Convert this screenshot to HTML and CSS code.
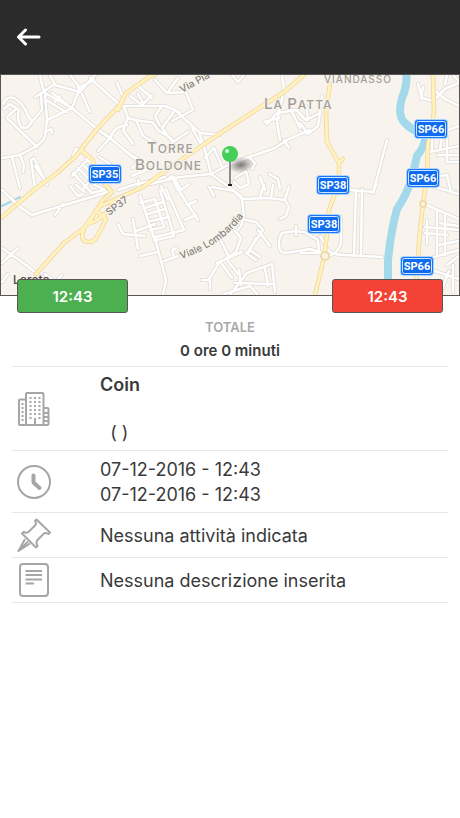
FILE: index.html
```html
<!DOCTYPE html>
<html lang="it">
    <head>
        <meta charset="utf-8">
        <title>Dettaglio</title>
        <meta name="viewport" content="width=device-width, initial-scale=1">
        <link rel="stylesheet" href="styles.css">
    </head>

    <body>
        <header class="topbar">
            <button class="back" type="button" aria-label="Indietro">
                <svg width="26" height="18" viewBox="0 0 26 18"><path d="M23 9H3M9.5 2L2.500 9l7 7"/></svg>
            </button>
        </header>

        <div class="map">
            <svg viewBox="1 75 458 220" preserveAspectRatio="xMidYMid slice">
                <defs>
                    <!-- small streets -->
                    <g id="streets">
                        <path d="M40 75L42 85 45 93 47 120 45 137Q41 144 33 148L20 155 2 158M43 92L72 108 97 129 110 138 128 153 140 163M50 75L55 85 80 92M35 97L43 92 55 84M70 75L80 88 72 108 47 120M95 75L78 94M78 88L94 80M90 78L120 105M117 83L123 97M82 94L90 112M46 100L66 112M52 93L67 104M60 96L55 102M45 132L51 129 52 133"/>
                        <path d="M3 104Q6 96 14 98Q24 104 27 114L32 122Q28 130 21 127Q16 118 19 110L10 104 4 109M41 95L42 110 29 125M7 118L37 147M8 116L15 110M12 157L20 188M20 155L24 165 23 172M31 160L34 158 47 185M31 160L35 188M35 166L45 180"/>
                        <path d="M120 106H165L175 110 200 133 220 135M124 107L128 118 123 130 133 144M128 118Q142 122 152 122L160 132M136 120L143 136 155 143M127 125Q114 126 110 138L98 151M152 122L158 130 172 139M162 106L155 116 160 126M175 110L162 128 173 142 188 132M173 142L166 152M182 117L178 111"/>
                        <path d="M155 80L167 93 186 92 193 110 172 121M167 93L178 78M130 96L142 105 152 95M138 86L152 98M143 103L138 94M97 129L110 138M199 132L205 150 211 174M192 128L202 146M205 158L214 148 222 167M211 174L228 165 252 156 275 148 289 139 310 130M150 184L180 177 211 174 225 184 242 197"/>
                        <path d="M232 75L238 82 244 75M282 75L284 90 279 112 277 122 280 140M264 122L279 118M267 124L279 111M284 140L289 148M300 123L308 134 318 126 322 96M278 113L296 110 306 120 318 114M290 108L300 128M306 106L308 120M248 157L255 163 252 169"/>
                        <path d="M75 156L79 149 76 149 73 156M72 176L90 157M73 173L88 189M78 168L94 184M82 164L98 179M86 159L103 172M92 178L84 188M99 157L110 164 109 190M126 152L140 160 132 168M118 190L133 185 150 181 165 177M132 176L150 168M138 180L139 187M166 180L172 176 177 189M174 177L181 190 189 184M161 186L168 200"/>
                        <path d="M2 190L20 207 32 215 58 207 85 199 108 192M55 215L63 204M70 186L78 196 83 194M76 185L85 192M85 186L92 193 104 190M95 185L105 190M2 248L26 265 48 282M18 248L2 263M45 274L60 285M62 275L53 285M2 282L8 274"/>
                        <path d="M118 224L123 234 145 236M133 219L138 249M136 231L155 224M140 256L158 252M140 196L155 241M140 203L155 199 164 227 150 230M145 208L163 202M148 214L165 209M151 221L169 217M160 190L174 236 156 240M166 189L184 230 155 237M177 188L198 220M187 205L196 201M185 220L196 215M155 238L166 280 163 294M164 261L178 256M174 257L172 250 177 248"/>
                        <path d="M209 187L214 196M212 187L234 191 242 199 244 216Q242 226 238 230M242 199L268 198 285 200 289 207 286 216 280 219M260 197L264 185M271 198L273 185M285 199L289 187M235 231L241 238 236 252 219 263 209 279M241 219L256 222 263 230 247 253M258 230L270 246M256 238L249 252M219 237L229 257 236 252M217 263L242 252M222 264L232 278M228 261L238 274M202 280L210 280 210 289M246 253L256 260M251 251L260 257M230 295L247 273 272 264 275 292M235 283L272 284M239 270L241 285M224 294L250 286 258 295M265 269L268 286"/>
                        <path d="M280 250Q277 240 282 233L296 231 302 232M280 250Q282 254 292 252L310 249 320 252M296 226V235"/>
                        <path d="M235 178L246 171 249 184 240 188 234 182M260 177L265 190M269 174L278 179 280 189M320 182L352 190M387 140L373 193M350 190L373 192 376 185M356 190L354 255M362 189L361 254M320 236L328 250Q332 255 345 255L382 257M304 232L318 240 319 252M341 217V237Q342 252 328 256M301 253H323"/>
                        <path d="M418 84L422 98 434 101M423 87L421 99M433 101L445 89 459 83M434 90L445 99 459 106M447 75L445 84M454 76L459 81M430 152L459 146M440 148L443 132 459 126M447 136V162H459M438 155H459M432 151V126M428 185L459 194M434 177L447 175 451 192M424 204L459 219M425 227L459 230M425 233L447 235M427 220V244M437 211V254M445 214V255M440 223L459 226M438 245L459 241M434 257L459 250M447 265L459 256M435 271L459 279M449 271L442 289M453 265V292"/>
                    </g>
                    <!-- provincial roads -->
                    <g id="roads">
                        <path d="M152 75L126 93 119 106 97 129 75 157 57 173 35 189 2 217M304 75L284 92 222 132 178 162 143 187 100 206 83 229 64 243 36 274M126 93L118 110M82 151L92 159 98 176 112 192 102 201 88 224 96 221 106 213 114 201M84 229Q79 241 88 242Q94 243 98 235L106 219 98 212"/>
                        <path d="M330 84L326 112 327 142 339 163 339 182 329 210 325 253 315 295M339 163L343 159M152 76L162 70M433 75L434 112 428 145 427 174 423 204 420 231 416 285"/>
                    </g>
                    <g id="shield">
                        <rect x="-17" y="-10" width="34" height="20" rx="4" fill="#a9d2ff"/>
                        <rect x="-16" y="-9" width="32" height="18" rx="3" fill="#1976f5"/>
                        <rect x="-14.5" y="-7.5" width="29" height="15" rx="2" fill="#0f6cf0" stroke="#cfe6ff" stroke-width="1"/>
                    </g>
                    <radialGradient id="shade">
                        <stop offset="0" stop-color="#444" stop-opacity=".7"/>
                        <stop offset="1" stop-color="#444" stop-opacity="0"/>
                    </radialGradient>
                </defs>

                <rect x="-400" y="75" width="1300" height="220" fill="#f8f4ed"/>
                <path class="river" d="M406 72Q408 84 402 98Q397 116 405 123Q412 131 425 134Q427 143 417 156L412 178Q406 196 397 209Q391 230 388 260V282"/>
                <path class="canal" d="M2 206L20 197"/>

                <use href="#streets" class="street-edge"/>
                <use href="#streets" class="street"/>
                <use href="#roads" class="road-edge"/>
                <use href="#roads" class="road"/>
                <g class="roundabout">
                    <circle cx="325" cy="256" r="4"/>
                    <circle cx="423" cy="204" r="3"/>
                </g>

                <g class="place">
                    <text x="147" y="153"><tspan>T</tspan><tspan class="cap">ORRE</tspan></text>
                    <text x="135" y="170"><tspan>B</tspan><tspan class="cap">OLDONE</tspan></text>
                    <text x="264" y="109"><tspan>L</tspan><tspan class="cap">A </tspan><tspan>P</tspan><tspan class="cap">ATTA</tspan></text>
                    <text x="324" y="83" class="hamlet">VIANDASSO</text>
                </g>
                <g class="road-name">
                    <text transform="translate(182 93) rotate(-29)">Via Pia</text>
                    <text transform="translate(109 216) rotate(-37)">SP37</text>
                    <path id="lombardia" d="M181 259Q226 245 249 208" fill="none"/>
                    <text><textPath href="#lombardia">Viale Lombardia</textPath></text>
                    <text x="13" y="284" class="town">Loreto</text>
                </g>

                <g class="shields">
                    <g transform="translate(105 174)"><use href="#shield"/><text y="4">SP35</text></g>
                    <g transform="translate(333 185)"><use href="#shield"/><text y="4">SP38</text></g>
                    <g transform="translate(324 224)"><use href="#shield"/><text y="4">SP38</text></g>
                    <g transform="translate(431 129)"><use href="#shield"/><text y="4">SP66</text></g>
                    <g transform="translate(423 178)"><use href="#shield"/><text y="4">SP66</text></g>
                    <g transform="translate(417 266)"><use href="#shield"/><text y="4">SP66</text></g>
                </g>

                <!-- pin -->
                <ellipse cx="241" cy="165" rx="13" ry="8" fill="url(#shade)" transform="rotate(-10 241 165)"/>
                <path d="M230 160V185" stroke="#8b8b8b" stroke-width="2"/>
                <path d="M228 185H232" stroke="#222" stroke-width="2"/>
                <circle cx="230" cy="154" r="8" fill="#43cf58"/>
                <circle cx="227" cy="151" r="2" fill="#d5ffdb"/>
            </svg>
        </div>

        <div class="times">
            <button class="time start" type="button">12:43</button>
            <button class="time end" type="button">12:43</button>
        </div>

        <main>
            <div class="total">
                <div class="total-label">TOTALE</div>
                <div class="total-value">0 ore 0 minuti</div>
            </div>

            <div class="row">
                <svg class="icon" viewBox="0 0 34 34">
                    <path d="M9 33V2Q9 1 10 1H25.500Q26.500 1 26.500 2V33M9 7.500H3Q2 7.500 2 8.500V32Q2 33 3 33H30.500Q31.500 33 31.500 32V17Q31.500 16 30.500 16H27M18 33V26M27 21H31M27 25H31M27 29H31"/>
                    <path class="windows" d="M13.500 5V29M18 5V24M22.500 5V29M5.500 11V31"/>
                </svg>
                <div class="text"><strong>Coin</strong><br><br>&nbsp; ( )</div>
            </div>
            <div class="row">
                <svg class="icon" viewBox="0 0 34 34">
                    <circle cx="17" cy="17" r="16"/>
                    <path class="hands" d="M16.500 10.500V17.500L22.500 23"/>
                </svg>
                <div class="text dates">07-12-2016 - 12:43<br>07-12-2016 - 12:43</div>
            </div>
            <div class="row">
                <svg class="icon" viewBox="0 0 34 34">
                    <path d="M19.500 1.500L33 14.500 31.500 16Q28 14 26.500 16L20.500 22Q18.500 24 20.500 28L19 29.500 5 15.500 6.500 14Q10 15.500 12 13.500L18 7.500Q20 5.500 18 3ZM8 21L1.500 33 13 25.500M11 23.500L1.500 33"/>
                </svg>
                <div class="text">Nessuna attività indicata</div>
            </div>
            <div class="row">
                <svg class="icon" viewBox="0 0 34 34">
                    <rect x="3" y="1" width="28" height="32" rx="3"/>
                    <path d="M8.500 8H25M8.500 12H25M8.500 16.500H25M8.500 20.500H17"/>
                </svg>
                <div class="text">Nessuna descrizione inserita</div>
            </div>
        </main>
    </body>
</html>
```

FILE: styles.css
```css
*{
    box-sizing: border-box;
}

body{
    margin: 0;
    background-color: white;
    color: #3a3a3a;
    font-family: Inter, "Liberation Sans", sans-serif;
    font-size: 18px;
    line-height: 24px;
}

button{
    font-family: inherit;
    cursor: pointer;
}

.topbar{
    height: 74px;
    background-color: #2b2b2b;
    display: flex;
    align-items: center;
    padding: 0 16px;
}

.back{
    display: flex;
    padding: 0;
    border: 0;
    background: none;
}
.back path{
    fill: none;
    stroke: white;
    stroke-width: 3px;
    stroke-linecap: round;
    stroke-linejoin: round;
}

/* map */
.map{
    height: 222px;
    border: 1px solid #5a5555;
    overflow: hidden;
}
.map svg{
    display: block;
    width: 100%;
    height: 100%;
}

.street-edge,
.street,
.road-edge,
.road,
.river,
.canal{
    fill: none;
    stroke-linecap: round;
    stroke-linejoin: round;
}
.street-edge{
    stroke: #dedad4;
    stroke-width: 4px;
}
.street{
    stroke: white;
    stroke-width: 2.5px;
}
.road-edge{
    stroke: #f0d3a0;
    stroke-width: 4.5px;
}
.road{
    stroke: #fff2bd;
    stroke-width: 3px;
}
.river{
    stroke: #a3d9ea;
    stroke-width: 8px;
}
.canal{
    stroke: #a3d9ea;
    stroke-width: 2px;
}
.roundabout{
    fill: #f8f4ed;
    stroke: #f0dba5;
    stroke-width: 2px;
}

.place{
    fill: #a29f9a;
    font-size: 15px;
    font-weight: 500;
    letter-spacing: 1px;
    stroke: #f8f4ed;
    stroke-width: 2px;
    paint-order: stroke;
}
.place .cap{
    font-size: 12px;
}
.place .hamlet{
    font-size: 10px;
}

.road-name{
    fill: #85817c;
    font-size: 10px;
    font-weight: 500;
    stroke: #f8f4ed;
    stroke-width: 2px;
    paint-order: stroke;
}
#lombardia{
    stroke: none;
}
.road-name .town{
    fill: #4c4a48;
    font-size: 12px;
}

.shields{
    fill: white;
    font-family: Roboto, sans-serif;
    font-size: 11px;
    font-weight: bold;
    text-anchor: middle;
}

/* start and end tags lie over the map edge */
.times{
    position: relative;
    display: flex;
    justify-content: space-between;
    margin-top: -17px;
    padding: 0 17px;
}
.time{
    width: 111px;
    height: 34px;
    padding: 0;
    border: 1px solid #5a5555;
    border-radius: 3px;
    color: white;
    font-size: 15px;
    font-weight: 600;
}
.start{
    background-color: #4caf50;
}
.end{
    background-color: #f44336;
}

main{
    padding: 0 12px;
}

.total{
    text-align: center;
    padding: 2px 0 3px;
    border-bottom: 1px solid #e8e8e8;
}
.total-label{
    color: #a9a9a9;
    font-size: 13px;
    font-weight: 600;
}
.total-value{
    font-size: 15px;
    font-weight: 600;
}

.row{
    display: flex;
    align-items: center;
    gap: 49px;
    padding: 5px;
    border-bottom: 1px solid #e8e8e8;
}
.text{
    padding-top: 1px;
}
.text strong{
    font-weight: 600;
}
.dates{
    line-height: 25px;
}

.icon{
    flex: none;
    width: 34px;
    height: 34px;
    fill: none;
    stroke: #a6a6a6;
    stroke-width: 2px;
    stroke-linejoin: round;
}
.windows{
    stroke-dasharray: 2 2;
}
.hands{
    stroke-width: 4px;
    stroke-linecap: round;
}
```
